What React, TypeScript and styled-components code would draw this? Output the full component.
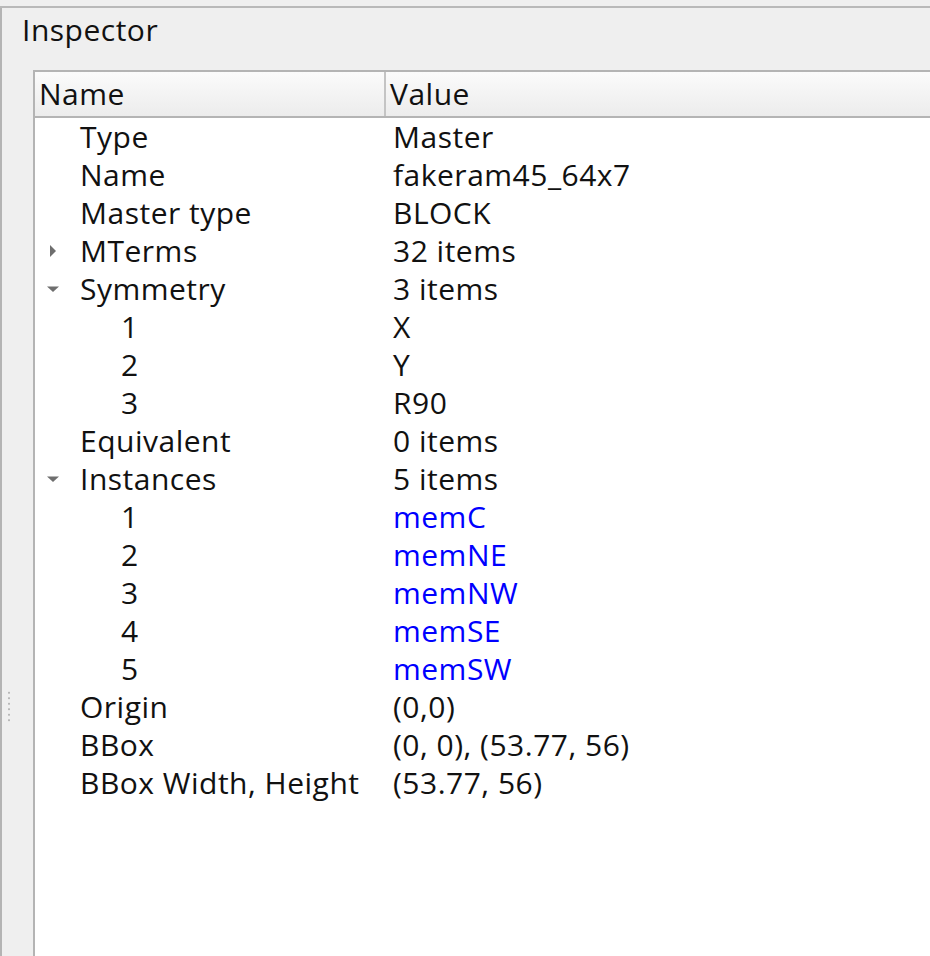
import React from 'react';
import styled, { createGlobalStyle } from 'styled-components';

type Node = {
  name: string;
  value: string;
  link?: boolean;
  open?: boolean;
  children?: Node[];
};

const data: Node[] = [
  { name: 'Type', value: 'Master' },
  { name: 'Name', value: 'fakeram45_64x7' },
  { name: 'Master type', value: 'BLOCK' },
  { name: 'MTerms', value: '32 items', open: false, children: [] },
  {
    name: 'Symmetry',
    value: '3 items',
    open: true,
    children: [
      { name: '1', value: 'X' },
      { name: '2', value: 'Y' },
      { name: '3', value: 'R90' },
    ],
  },
  { name: 'Equivalent', value: '0 items' },
  {
    name: 'Instances',
    value: '5 items',
    open: true,
    children: [
      { name: '1', value: 'memC', link: true },
      { name: '2', value: 'memNE', link: true },
      { name: '3', value: 'memNW', link: true },
      { name: '4', value: 'memSE', link: true },
      { name: '5', value: 'memSW', link: true },
    ],
  },
  { name: 'Origin', value: '(0,0)' },
  { name: 'BBox', value: '(0, 0), (53.77, 56)' },
  { name: 'BBox Width, Height', value: '(53.77, 56)' },
];

const GlobalStyle = createGlobalStyle`
  html, body {
    margin: 0;
    padding: 0;
    background: #efefef;
    height: 100%;
    overflow: hidden;
  }
  #root {
    height: 100%;
  }
  body {
    font-family: 'Open Sans', 'DejaVu Sans', sans-serif;
    font-size: 30px;
    letter-spacing: 0.5px;
    color: #111;
  }
`;

const Arrow: React.FC<{ open?: boolean }> = ({ open }) => (
  <ArrowBox>
    <svg width="14" height="14" viewBox="0 0 14 14">
      {open ? <path d="M1 4.5 L13 4.5 L7 10 Z" fill="#6e6e6e" /> : <path d="M4 1 L10 7 L4 13 Z" fill="#6e6e6e" />}
    </svg>
  </ArrowBox>
);

const renderRows = (nodes: Node[], depth: number): React.JSX.Element[] => {
  let out: React.JSX.Element[] = [];
  nodes.forEach((node, i) => {
    out.push(
      <Row key={`${depth}-${node.name}-${i}`}>
        <NameCell depth={depth}>
          {node.children ? <Arrow open={node.open} /> : <ArrowBox />}
          <span>{node.name}</span>
        </NameCell>
        <ValueCell link={node.link}>{node.value}</ValueCell>
      </Row>
    );
    if (node.children && node.open) {
      out = out.concat(renderRows(node.children, depth + 1));
    }
  });
  return out;
};

const App: React.FC = () => {
  return (
    <>
      <GlobalStyle />
      <Page>
        <TopRule />
        <Dock>
          <Title>Inspector</Title>
          <DockBody>
            <Handle>
              <Grip />
            </Handle>
            <Tree>
              <Header>
                <HeaderCell>Name</HeaderCell>
                <HeaderCell last>Value</HeaderCell>
              </Header>
              <Rows>{renderRows(data, 0)}</Rows>
            </Tree>
          </DockBody>
        </Dock>
      </Page>
    </>
  );
};

export default App;

const Page = styled.div`
  display: flex;
  flex-direction: column;
  height: 100%;
  padding-top: 6px;
  box-sizing: border-box;
`;

const TopRule = styled.div`
  height: 2px;
  background: #b9b9b9;
`;

const Dock = styled.div`
  flex: 1;
  display: flex;
  flex-direction: column;
  border-left: 2px solid #b4b4b4;
  background: #efefef;
  min-height: 0;
`;

const Title = styled.div`
  height: 62px;
  box-sizing: border-box;
  padding: 2px 0 0 20px;
  line-height: 40px;
`;

const DockBody = styled.div`
  flex: 1;
  display: flex;
  min-height: 0;
`;

const Handle = styled.div`
  width: 31px;
  display: flex;
  align-items: flex-start;
  padding-top: 620px;
  box-sizing: border-box;
`;

const Grip = styled.div`
  margin-left: 6px;
  width: 2px;
  height: 32px;
  background-image: radial-gradient(circle, #b8b8b8 1px, transparent 1.2px);
  background-size: 2px 5.5px;
`;

const Tree = styled.div`
  flex: 1;
  display: flex;
  flex-direction: column;
  background: #fff;
  border-left: 2px solid #b4b4b4;
  border-top: 2px solid #b4b4b4;
`;

const Header = styled.div`
  display: grid;
  grid-template-columns: 351px 1fr;
  height: 44px;
  background: linear-gradient(#fbfbfb, #ececec);
  border-bottom: 2px solid #b4b4b4;
`;

const HeaderCell = styled.div<{ last?: boolean }>`
  display: flex;
  align-items: center;
  padding-left: 4px;
  border-right: ${(p) => (p.last ? 'none' : '2px solid #c4c4c4')};
  line-height: 1;
`;

const Rows = styled.div`
  display: flex;
  flex-direction: column;
`;

const Row = styled.div`
  display: grid;
  grid-template-columns: 351px 1fr;
  height: 38px;
  align-items: center;
  line-height: 38px;
`;

const NameCell = styled.div<{ depth: number }>`
  display: flex;
  align-items: center;
  padding-left: ${(p) => 11 + p.depth * 41}px;
  white-space: nowrap;
`;

const ArrowBox = styled.span`
  width: 34px;
  display: inline-flex;
  align-items: center;
`;

const ValueCell = styled.div<{ link?: boolean }>`
  padding-left: 7px;
  color: ${(p) => (p.link ? '#0000ff' : '#111')};
  white-space: nowrap;
`;
